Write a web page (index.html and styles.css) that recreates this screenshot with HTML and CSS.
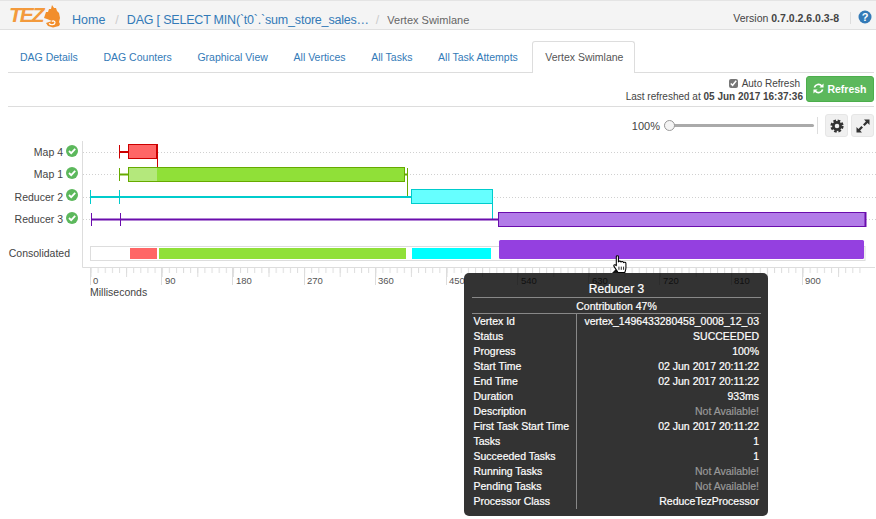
FILE: index.html
```html
<!DOCTYPE html>
<html lang="en">

<head>
    <meta charset="UTF-8">
    <meta name="viewport" content="width=device-width, initial-scale=1.0">
    <title>Vertex Swimlane</title>
    <link rel="stylesheet" href="styles.css">
</head>
<body>
    <header class="navbar">
        <div class="logo">
            <span class="logo-text">TEZ</span>
            <svg class="logo-mascot" width="18" height="24" viewBox="0 0 18 24">
                <path fill="#f28e2b" d="M2 11 L3 8 L5 8 L6 5 L8 5 L9 1 L11 4 L13 4 L14 7 L16 9 L17 14 L16 18 L17 20 L16 22 L10 23.5 L5 22 L3 19 L6 18 L9 17 L4 15 L1 14 Z"/>
                <path fill="none" stroke="#fff" stroke-width="1.2" d="M6 19.5 C8 21.5 12 21 12 18.5 C12 17 10 16.5 9 17.5"/>
            </svg>
        </div>
        <ol class="breadcrumb">
            <li class="home"><a href="#">Home</a></li>
            <li class="sep">/</li>
            <li class="dag"><a href="#">DAG [ SELECT MIN(`t0`.`sum_store_sales…</a></li>
            <li class="sep">/</li>
            <li class="current">Vertex Swimlane</li>
        </ol>
        <div class="version">Version <b>0.7.0.2.6.0.3-8</b></div>
        <div class="help">
            <svg width="14" height="14" viewBox="0 0 14 14">
                <circle cx="7" cy="7" r="6.5" fill="#337ab7"/>
                <text class="help-mark" x="7" y="11">?</text>
            </svg>
        </div>
    </header>

    <main class="content">
        <ul class="tabs">
            <li><a href="#">DAG Details</a></li>
            <li><a href="#">DAG Counters</a></li>
            <li><a href="#">Graphical View</a></li>
            <li><a href="#">All Vertices</a></li>
            <li><a href="#">All Tasks</a></li>
            <li><a href="#">All Task Attempts</a></li>
            <li class="active"><a href="#">Vertex Swimlane</a></li>
        </ul>

        <div class="refresh-bar">
            <div class="refresh-info">
                <label class="auto-refresh"><input type="checkbox" checked> Auto Refresh</label>
                <div>Last refreshed at <b>05 Jun 2017 16:37:36</b></div>
            </div>
            <button class="refresh-button">
                <svg width="11" height="11" viewBox="0 0 12 12" fill="none" stroke="#fff" stroke-width="1.8">
                    <path d="M1.5 5 A4.6 4.6 0 0 1 9.6 3.4"/>
                    <path d="M10.5 7 A4.6 4.6 0 0 1 2.4 8.6"/>
                    <path fill="#fff" stroke="none" d="M11.5 0.5 V5 H7 Z M0.5 11.5 V7 H5 Z"/>
                </svg>
                Refresh
            </button>
        </div>

        <div class="zoom-bar">
            <span>100%</span>
            <div class="slider"><span class="slider-thumb"></span></div>
            <span class="zoom-sep"></span>
            <button class="icon-button">
                <svg width="14" height="14" viewBox="0 0 14 14" fill="none" stroke="#333">
                    <circle cx="7" cy="7" r="3.6" stroke-width="2.6"/>
                    <circle cx="7" cy="7" r="5.4" stroke-width="2.4" stroke-dasharray="2.6 1.64"/>
                </svg>
            </button>
            <button class="icon-button">
                <svg width="14" height="14" viewBox="0 0 14 14" fill="#333">
                    <path d="M8 0.5 H13.5 V6 L11.6 4.1 L8.6 7 L7 5.4 L9.9 2.4 Z"/>
                    <path d="M6 13.5 H0.5 V8 L2.4 9.9 L5.4 7 L7 8.6 L4.1 11.6 Z"/>
                </svg>
            </button>
        </div>
    </main>

    <svg class="chart" width="876" height="190" viewBox="0 110 876 190">
        <defs>
            <pattern id="minorTicks" x="90.5" y="267" width="7.12" height="6" patternUnits="userSpaceOnUse">
                <line x1="0.5" y1="0" x2="0.5" y2="6" stroke="#ddd"/>
            </pattern>
            <pattern id="midTicks" x="90.5" y="267" width="35.6" height="10" patternUnits="userSpaceOnUse">
                <line x1="0.5" y1="0" x2="0.5" y2="10" stroke="#ddd"/>
            </pattern>
        </defs>

        <!-- labels -->
        <text class="row-label" x="63" y="156">Map 4</text>
        <text class="row-label" x="63" y="178">Map 1</text>
        <text class="row-label" x="63" y="201">Reducer 2</text>
        <text class="row-label" x="63" y="223">Reducer 3</text>
        <text class="row-label" x="70" y="257">Consolidated</text>

        <g class="done-icon">
            <circle cx="72" cy="151" r="6"/><path d="M69 151 L71.2 153.2 L75.2 148.8"/>
            <circle cx="72" cy="173" r="6"/><path d="M69 173 L71.2 175.2 L75.2 170.8"/>
            <circle cx="72" cy="195" r="6"/><path d="M69 195 L71.2 197.2 L75.2 192.8"/>
            <circle cx="72" cy="218" r="6"/><path d="M69 218 L71.2 220.2 L75.2 215.8"/>
        </g>

        <!-- grid -->
        <g class="row-line">
            <line x1="83" y1="152.5" x2="876" y2="152.5"/>
            <line x1="83" y1="174.5" x2="876" y2="174.5"/>
            <line x1="83" y1="197.5" x2="876" y2="197.5"/>
            <line x1="83" y1="219.5" x2="876" y2="219.5"/>
        </g>
        <path class="axis" d="M82.5 141 V267.5 H875"/>

        <!-- axis ticks -->
        <rect x="90.5" y="267" width="771" height="6" fill="url(#minorTicks)"/>
        <rect x="90.5" y="267" width="771" height="10" fill="url(#midTicks)"/>
        <path class="major-tick" d="M90.5 267 V285 M161.5 267 V285 M232.5 267 V285 M304.5 267 V285 M375.5 267 V285 M446.5 267 V285 M517.5 267 V285 M588.5 267 V285 M659.5 267 V285 M731.5 267 V285 M802.5 267 V285"/>
        <g class="tick-label">
            <text x="93" y="284">0</text>
            <text x="165" y="284">90</text>
            <text x="236" y="284">180</text>
            <text x="307" y="284">270</text>
            <text x="378" y="284">360</text>
            <text x="449" y="284">450</text>
            <text x="521" y="284">540</text>
            <text x="592" y="284">630</text>
            <text x="663" y="284">720</text>
            <text x="734" y="284">810</text>
            <text x="805" y="284">900</text>
        </g>
        <text class="axis-title" x="90" y="296">Milliseconds</text>

        <!-- map 4 -->
        <g stroke="#cc0000">
            <path class="thin" d="M119.5 145 V158.5"/>
            <path class="thick" d="M120 152 H128"/>
            <rect x="128.5" y="144.5" width="28.5" height="14" fill="#ff6666"/>
            <path class="thick" d="M157 144 V159"/>
            <path class="thin" d="M157.5 159 V167"/>
        </g>

        <!-- map 1 -->
        <g stroke="#66aa00">
            <path class="thin" d="M119.5 168 V181"/>
            <path class="thick" d="M120 174.5 H128"/>
            <rect x="128.5" y="167.5" width="276" height="14" fill="#90e038"/>
            <rect x="129" y="168" width="28" height="13" fill="#b4e87c" stroke="none"/>
            <path class="thick" d="M405 174.5 H407"/>
            <path class="thin" d="M407.5 168 V196"/>
        </g>

        <!-- reducer 2 -->
        <g stroke="#00cccc">
            <path class="thin" d="M90.5 190 V204 M119.5 190 V204"/>
            <path class="thick" d="M91 197 H411"/>
            <rect x="411.5" y="189.5" width="81" height="14" fill="#66ffff"/>
            <path class="thin" d="M492.5 204 V219"/>
        </g>

        <!-- reducer 3 -->
        <g stroke="#6a0dad">
            <path class="thin" d="M91.5 213 V226 M120.5 213 V226"/>
            <path class="thick" d="M92 219.5 H498"/>
            <rect x="498.5" y="212.5" width="367" height="14" fill="#b27ce8"/>
            <path class="thick" d="M865.5 212 V227"/>
        </g>

        <!-- consolidated -->
        <rect class="consolidated" x="90.5" y="246.5" width="774.5" height="14"/>
        <rect x="130" y="248" width="27" height="11" fill="#ff6666"/>
        <rect x="159" y="248" width="247" height="11" fill="#90e038"/>
        <rect x="412" y="248" width="79" height="11" fill="#00ffff"/>
        <rect x="499" y="240" width="365" height="19" rx="1.5" fill="#9440e0"/>
    </svg>

    <div class="tip">
        <span class="tip-arrow"></span>
        <div class="tip-title">Reducer 3</div>
        <div class="tip-sub">Contribution 47%</div>
        <table class="tip-table">
            <tr><td>Vertex Id</td><td>vertex_1496433280458_0008_12_03</td></tr>
            <tr><td>Status</td><td>SUCCEEDED</td></tr>
            <tr><td>Progress</td><td>100%</td></tr>
            <tr><td>Start Time</td><td>02 Jun 2017 20:11:22</td></tr>
            <tr><td>End Time</td><td>02 Jun 2017 20:11:22</td></tr>
            <tr><td>Duration</td><td>933ms</td></tr>
            <tr><td>Description</td><td class="na">Not Available!</td></tr>
            <tr><td>First Task Start Time</td><td>02 Jun 2017 20:11:22</td></tr>
            <tr><td>Tasks</td><td>1</td></tr>
            <tr><td>Succeeded Tasks</td><td>1</td></tr>
            <tr><td>Running Tasks</td><td class="na">Not Available!</td></tr>
            <tr><td>Pending Tasks</td><td class="na">Not Available!</td></tr>
            <tr><td>Processor Class</td><td>ReduceTezProcessor</td></tr>
        </table>
    </div>

    <svg class="hand" width="14" height="18" viewBox="0.5 0 13 17">
        <path fill="#fff" stroke="#000" stroke-width="1" stroke-linejoin="round" d="M3.5 1.5 C3.5 0.5 5.5 0.5 5.5 1.5 V6.5 C6 5.5 7.8 5.5 8 6.7 C8.5 5.8 10.2 6 10.3 7.2 C11 6.5 12.6 6.9 12.6 8 V12 C12.6 14 12 15 11.5 16.5 H5 C4.5 15 3 13.5 1.5 11 C0.5 9.5 1.8 8.3 3.5 10 Z"/>
        <path fill="none" stroke="#000" stroke-width="0.8" d="M6 11 V14 M8.2 11 V14 M10.4 11 V14"/>
    </svg>
</body>

</html>
```

FILE: styles.css
```css
body {
    font-family: "Liberation Sans", Arial, sans-serif;
    font-size: 11px;
    color: #444;
    background-color: #fff;
    margin: 0;
    padding: 0;
    height: 519px;
    overflow: hidden;
    position: relative;
}

a {
    color: #337ab7;
    text-decoration: none;
}

.navbar {
    display: flex;
    align-items: center;
    height: 28px;
    background-color: #f4f4f4;
    border-top: 1px solid #e4e4e4;
    border-bottom: 1px solid #e0e0e0;
}

.logo {
    display: flex;
    align-items: center;
    margin-left: 9px;
    width: 63px;
}

.logo-text {
    font-size: 21px;
    font-weight: bold;
    font-style: italic;
    color: #f39a3c;
    letter-spacing: -2px;
    width: 34px;
}

.logo-mascot {
    margin-top: 2px;
}

.breadcrumb {
    display: flex;
    list-style: none;
    margin: 11px 0 0;
    padding: 0;
    font-size: 12.5px;
    flex: 1;
}

.breadcrumb .home {
    margin-right: 2px;
}

.breadcrumb .dag {
    letter-spacing: -0.2px;
    margin-right: -1px;
}

.breadcrumb .sep {
    color: #ccc;
    margin: 0 8px;
}

.breadcrumb .current {
    color: #666;
    font-size: 11px;
    line-height: 15px;
}

.version {
    font-size: 10.5px;
    color: #444;
    padding-right: 11px;
    margin-top: 5px;
    border-right: 1px solid #ddd;
    line-height: 12px;
}

.help {
    display: flex;
    margin: 4px 4px 0 7px;
}

.help-mark {
    fill: #fff;
    font-size: 11px;
    font-weight: bold;
    text-anchor: middle;
}

.content {
    margin: 0 2px 0 8px;
}

.tabs {
    display: flex;
    list-style: none;
    margin: 11px 0 0;
    padding: 0;
    height: 31px;
    font-size: 10.5px;
    border-bottom: 1px solid #ddd;
}

.tabs a {
    display: block;
    padding: 0 12.85px;
    line-height: 32px;
}

.tabs li:first-child {
    margin-left: -0.85px;
}

.tabs .active {
    height: 32px;
    box-sizing: border-box;
    margin-left: 1px;
    background-color: #fff;
    border: 1px solid #ddd;
    border-bottom: none;
    border-radius: 3px 3px 0 0;
}

.tabs .active a {
    color: #555;
    padding: 0 10.5px 0 12.5px;
    line-height: 30px;
}

.refresh-bar {
    display: flex;
    justify-content: flex-end;
    height: 34px;
    padding-top: 3px;
    box-sizing: border-box;
    border-bottom: 1px solid #ddd;
}

.refresh-info {
    text-align: right;
    font-size: 10px;
    line-height: 13px;
    margin-right: 3px;
    padding-top: 1px;
}

.auto-refresh {
    padding-right: 3px;
}

.auto-refresh input {
    width: 9px;
    height: 9px;
    margin: 0 1px 0 0;
    vertical-align: -1px;
    accent-color: #777;
}

.refresh-button {
    width: 68px;
    height: 26px;
    padding: 0;
    font-family: inherit;
    font-size: 10.5px;
    font-weight: bold;
    color: #fff;
    background-color: #5cb85c;
    border: 1px solid #4cae4c;
    border-radius: 3px;
}

.refresh-button svg {
    vertical-align: -1px;
}

.zoom-bar {
    display: flex;
    align-items: center;
    justify-content: flex-end;
    height: 23px;
    margin-top: 7px;
    font-size: 11px;
}

.slider {
    position: relative;
    width: 150px;
    height: 3px;
    margin-left: 4px;
    background-color: #aaa;
    border-radius: 2px;
}

.slider-thumb {
    position: absolute;
    left: 0;
    top: -4px;
    width: 9px;
    height: 9px;
    background-color: #f4f4f4;
    border: 1px solid #999;
    border-radius: 50%;
}

.zoom-sep {
    width: 1px;
    height: 17px;
    margin: 0 7px 0 3px;
    background-color: #ddd;
}

.icon-button {
    display: flex;
    align-items: center;
    justify-content: center;
    width: 23px;
    height: 23px;
    padding: 0;
    margin-left: 3px;
    background-color: #f0f0f0;
    border: 1px solid #e6e6e6;
    border-radius: 3px;
}

.zoom-sep + .icon-button {
    margin-left: 0;
}

.chart {
    display: block;
    position: absolute;
    left: 0;
    top: 110px;
}

.row-label {
    font-size: 10.5px;
    fill: #444;
    text-anchor: end;
}

.done-icon circle {
    fill: #5cb85c;
}

.done-icon path {
    fill: none;
    stroke: #fff;
    stroke-width: 1.8;
}

.row-line line {
    stroke: #d0d0d0;
    stroke-dasharray: 1 2;
}

.axis {
    fill: none;
    stroke: #ddd;
}

.major-tick {
    fill: none;
    stroke: #ddd;
}

.tick-label text {
    font-size: 9.5px;
    fill: #555;
}

.axis-title {
    font-size: 10.5px;
    fill: #444;
}

.thin {
    fill: none;
    stroke-width: 1;
}

.thick {
    fill: none;
    stroke-width: 2;
}

.consolidated {
    fill: #fff;
    stroke: #ddd;
}

.tip {
    position: absolute;
    left: 464px;
    top: 273px;
    width: 304px;
    height: 243px;
    box-sizing: border-box;
    padding: 9px 7px 0 8px;
    background-color: rgba(0, 0, 0, 0.8);
    border-radius: 5px;
    color: #fff;
    font-size: 10.5px;
    -webkit-text-stroke: 0.2px;
}

.tip-arrow {
    position: absolute;
    left: 148px;
    top: -4px;
    border-left: 4px solid transparent;
    border-right: 4px solid transparent;
    border-bottom: 4px solid #111;
}

.tip-title {
    height: 15px;
    line-height: 15px;
    font-size: 12px;
    text-align: center;
    border-bottom: 1px solid #888;
}

.tip-sub {
    height: 15px;
    line-height: 16px;
    text-align: center;
    border-bottom: 1px solid #888;
}

.tip-table {
    width: 100%;
    border-collapse: collapse;
}

.tip-table td {
    height: 15px;
    padding: 0 2px 0 1.5px;
    line-height: 15px;
    white-space: nowrap;
}

.tip-table td:first-child {
    width: 100px;
    border-right: 1px solid #888;
}

.tip-table td:last-child {
    text-align: right;
}

.tip-table .na {
    color: #999;
}

.hand {
    position: absolute;
    left: 613px;
    top: 255px;
}
```
